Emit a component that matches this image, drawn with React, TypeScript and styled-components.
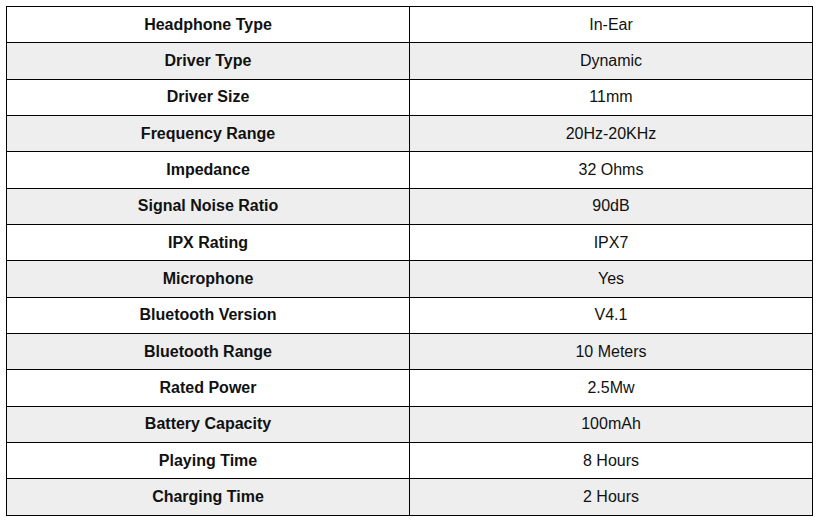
import React from "react";
import styled, { createGlobalStyle } from "styled-components";

const Global = createGlobalStyle`
  html, body { margin: 0; padding: 0; background: #fff; }
  body { font-family: "Liberation Sans", Arial, sans-serif; }
`;

const Wrap = styled.div`
  padding: 6px 0 0 6px;
`;

const Table = styled.table`
  width: 807px;
  height: 510px;
  border-collapse: collapse;
  table-layout: fixed;
  font-family: "Liberation Sans", Arial, sans-serif;
  font-size: 16px;
  color: #111;
`;

const Row = styled.tr<{ $striped: boolean }>`
  background: ${(p) => (p.$striped ? "#eeeeee" : "#ffffff")};
`;

const Cell = styled.td<{ $bold?: boolean }>`
  border: 1px solid #000;
  text-align: center;
  vertical-align: middle;
  padding: 0 8px;
  font-weight: ${(p) => (p.$bold ? 700 : 400)};
  width: 50%;
`;

const rows: [string, string][] = [
  ["Headphone Type", "In-Ear"],
  ["Driver Type", "Dynamic"],
  ["Driver Size", "11mm"],
  ["Frequency Range", "20Hz-20KHz"],
  ["Impedance", "32 Ohms"],
  ["Signal Noise Ratio", "90dB"],
  ["IPX Rating", "IPX7"],
  ["Microphone", "Yes"],
  ["Bluetooth Version", "V4.1"],
  ["Bluetooth Range", "10 Meters"],
  ["Rated Power", "2.5Mw"],
  ["Battery Capacity", "100mAh"],
  ["Playing Time", "8 Hours"],
  ["Charging Time", "2 Hours"],
];

export default function App() {
  return (
    <>
      <Global />
      <Wrap>
        <Table>
          <tbody>
            {rows.map(([k, v], i) => (
              <Row key={k} $striped={i % 2 === 1}>
                <Cell $bold>{k}</Cell>
                <Cell>{v}</Cell>
              </Row>
            ))}
          </tbody>
        </Table>
      </Wrap>
    </>
  );
}
